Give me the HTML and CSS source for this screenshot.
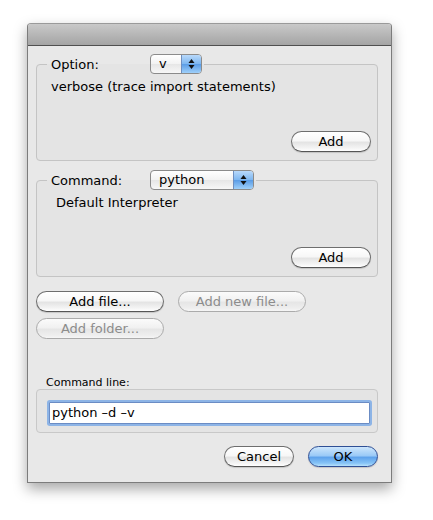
FILE: index.html
```html
<!DOCTYPE html>
<html>
<head>
<meta charset="utf-8">
<link rel="stylesheet" href="styles.css">
</head>
<body>
<div class="window">
  <div class="titlebar"></div>
  <div class="content">
    <fieldset class="group g1">
      <legend><div class="legend-row"><span class="glabel">Option:</span>
        <div class="popup small"><span class="ptext">v</span><span class="stepper"><svg width="7" height="12" viewBox="0 0 7 12"><path d="M3.5 1 L6.5 5 L0.5 5 Z" fill="#111"/><path d="M3.5 11 L6.5 7 L0.5 7 Z" fill="#111"/></svg></span></div></div></legend>
      <div class="ginner">
        <div class="desc">verbose (trace import statements)</div>
        <div class="btnrow"><button class="aqua add">Add</button></div>
      </div>
    </fieldset>
    <fieldset class="group g2">
      <legend><div class="legend-row"><span class="glabel">Command:</span>
        <div class="popup wide"><span class="ptext">python</span><span class="stepper"><svg width="7" height="12" viewBox="0 0 7 12"><path d="M3.5 1 L6.5 5 L0.5 5 Z" fill="#111"/><path d="M3.5 11 L6.5 7 L0.5 7 Z" fill="#111"/></svg></span></div></div></legend>
      <div class="ginner">
        <div class="desc desc2">Default Interpreter</div>
        <div class="btnrow"><button class="aqua add">Add</button></div>
      </div>
    </fieldset>
    <div class="filebtns">
      <button class="aqua fb">Add file...</button>
      <button class="aqua fb disabled">Add new file...</button>
      <button class="aqua fb disabled">Add folder...</button>
    </div>
    <div class="cl-label">Command line:</div>
    <div class="cl-box">
      <div class="field">python –d –v</div>
    </div>
    <div class="actions">
      <button class="aqua act">Cancel</button>
      <button class="aqua act default">OK</button>
    </div>
  </div>
</div>
</body>
</html>
```
FILE: styles.css
```css
html, body {
  margin: 0;
  padding: 0;
  background: #ffffff;
}
body {
  font-family: "DejaVu Sans", "Liberation Sans", sans-serif;
  font-size: 13px;
  color: #000;
  min-height: 520px;
}
.window {
  position: relative;
  margin-left: 27px;
  margin-top: 23px;
  width: 363px;
  height: 458px;
  border: 1px solid #7c7c7c;
  border-top-color: #9a9a9a;
  border-radius: 4px 4px 0 0;
  background: #e8e8e8;
  box-shadow: 0 6px 14px rgba(0,0,0,0.35);
  display: flex;
  flex-direction: column;
}
.window::before {
  content: "";
  position: absolute;
  left: -8px;
  right: -8px;
  top: 14px;
  bottom: -18px;
  background: rgba(0,0,0,0.6);
  filter: blur(15px);
  z-index: -1;
}
.titlebar {
  height: 21px;
  flex: none;
  background: linear-gradient(#c9c9c9, #a4a4a4);
  border-bottom: 1px solid #4f4f4f;
  border-radius: 3px 3px 0 0;
}
.content {
  padding: 8px 13px 0 8px;
  display: flex;
  flex-direction: column;
}
.group {
  margin: 0;
  border: 1px solid #c4c4c4;
  border-radius: 4px;
  background: #e4e4e4;
  padding: 0 6px 8px 14px;
  min-width: 0;
}
.group legend {
  padding: 0 2px;
  margin-left: -4px;
}
.legend-row {
  display: flex;
  align-items: center;
  height: 20px;
}
.glabel {
  width: 101px;
  padding-left: 2px;
  box-sizing: border-box;
}
.popup {
  height: 20px;
  box-sizing: border-box;
  border: 1px solid #8b8b8b;
  border-radius: 4px;
  background: linear-gradient(#ffffff, #f2f2f2 50%, #e6e6e6 51%, #f7f7f7);
  display: flex;
  align-items: center;
  overflow: hidden;
}
.popup.small { width: 52px; }
.popup.wide { width: 104px; }
.ptext {
  flex: 1;
  padding-left: 8px;
  line-height: 18px;
}
.stepper {
  width: 19px;
  height: 18px;
  border-left: 1px solid #6f8fc0;
  background: linear-gradient(#b8d9fb, #7db6f0 50%, #5a9ce6 51%, #9fd0fa);
  display: flex;
  align-items: center;
  justify-content: center;
}
.ginner {
  height: 78px;
  display: flex;
  flex-direction: column;
  padding-top: 5px;
  box-sizing: border-box;
}
.desc {
  line-height: 16px;
}
.desc2 {
  padding-left: 5px;
}
.btnrow {
  margin-top: auto;
  display: flex;
  justify-content: flex-end;
}
.g2 { margin-top: 9px; }
.g2 .ginner { height: 78px; }
.aqua {
  font-family: inherit;
  font-size: 13px;
  height: 21px;
  box-sizing: border-box;
  border: 1px solid #6e6e6e;
  border-bottom-color: #555;
  border-radius: 11px;
  background: linear-gradient(#ffffff, #f7f7f7 45%, #e4e4e4 55%, #f4f4f4 85%, #ffffff);
  box-shadow: 0 1px 1px rgba(0,0,0,0.15);
  color: #000;
  padding: 0;
  margin: 0;
  line-height: 19px;
}
.add { width: 80px; }
.filebtns {
  margin-top: 14px;
  display: grid;
  grid-template-columns: 128px 128px;
  column-gap: 14px;
  row-gap: 6px;
  padding-left: 0;
}
.aqua.disabled {
  color: #8c8c8c;
  border-color: #ababab;
  background: linear-gradient(#fbfbfb, #f1f1f1 45%, #e6e6e6 55%, #eeeeee 85%, #f6f6f6);
  box-shadow: none;
}
.cl-label {
  margin-top: 38px;
  font-size: 11px;
  line-height: 12px;
  padding-left: 10px;
}
.cl-box {
  margin-top: 0;
  border: 1px solid #c8c8c8;
  border-radius: 4px;
  background: #e4e4e4;
  padding: 12px 7px 8px 12px;
}
.field {
  height: 22px;
  box-sizing: border-box;
  background: #fff;
  border: 1px solid #6b8cc4;
  box-shadow: 0 0 0 2px #8db4e6;
  border-radius: 1px;
  line-height: 20px;
  padding-left: 2px;
}
.actions {
  margin-top: 13px;
  display: flex;
  justify-content: flex-end;
  gap: 14px;
}
.act { width: 70px; }
.aqua.default {
  border-color: #2f4f95;
  background: linear-gradient(#cde6fc, #9bcaf7 45%, #5fa3ec 55%, #86c3f6 85%, #b8e2fc);
}
```
